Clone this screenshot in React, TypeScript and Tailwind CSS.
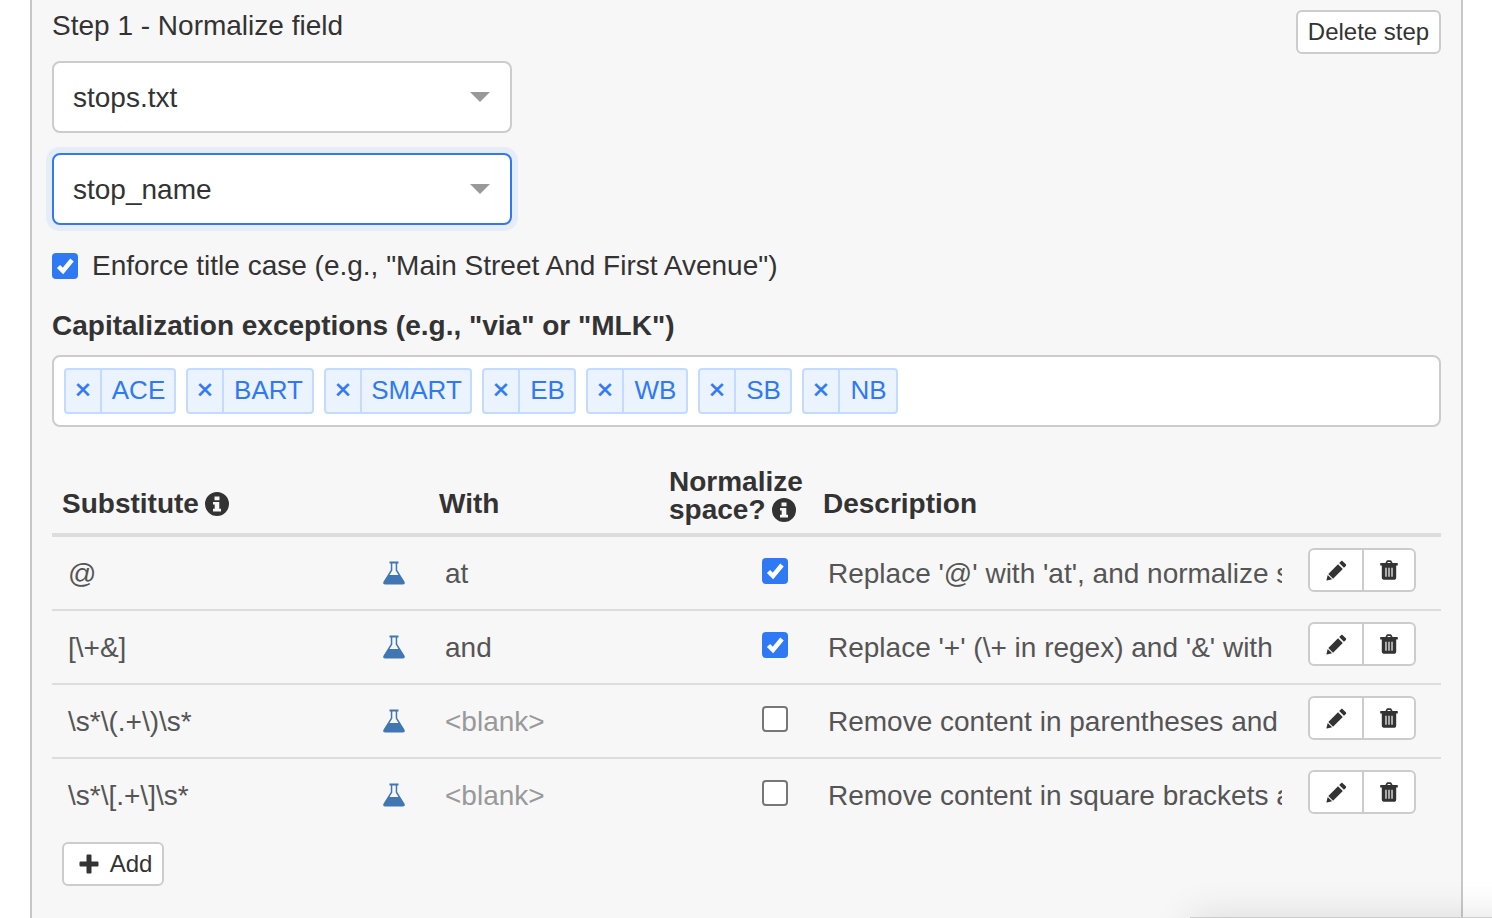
import React from 'react';

const FlaskIcon = () => (
  <svg viewBox="0 0 24 24" className="w-[24px] h-[24px] text-[#4077b3] -ml-[1px]" fill="currentColor">
    <path fillRule="evenodd" d="M7.500.5h9v2h-1.300V9l7.200 11.500c1 1.700.2 3-1.700 3H3.300c-1.900 0-2.700-1.300-1.700-3L8.800 9V2.500H7.500V.5zM10.300 2.500v7L7.500 14h9l-2.800-4.500v-7h-3.400z" />
  </svg>
);

const PencilIcon = () => (
  <svg viewBox="0 0 22 22" className="w-[21px] h-[21px] text-[#333]" fill="currentColor">
    <path d="M15.800 1.200c.5-.5 1.200-.5 1.700 0l3.300 3.300c.5.500.5 1.200 0 1.700l-2 2-5-5 2-2zM12.600 4.400l5 5L7.400 19.600l-5-5L12.600 4.400zM1.800 15.600l4.600 4.600L1 21.500c-.4.100-.6-.1-.5-.5l1.300-5.400z" />
  </svg>
);

const TrashIcon = () => (
  <svg viewBox="0 0 20 22" className="w-[18px] h-[20px] text-[#333]" fill="currentColor">
    <path fillRule="evenodd" d="M6 3.200 7.200 1c.2-.5.700-.8 1.200-.8h3.200c.5 0 1 .3 1.200.8L14 3.200h5.200c.4 0 .6.2.6.6v1.600c0 .4-.2.6-.6.6H18v13.300c0 1.500-1 2.600-2.300 2.600H4.300C3 22 2 20.900 2 19.400V6H.8c-.4 0-.6-.2-.6-.6V3.800c0-.4.2-.6.6-.6H6zM8.100 3.200h3.800l-.6-1.200H8.700l-.6 1.200zM6 8.500v10h1.300v-10H6zm3.350 0v10h1.300v-10h-1.300zm3.350 0v10H14v-10h-1.300z" />
  </svg>
);

const InfoIcon = () => (
  <svg viewBox="0 0 24 24" className="w-[24px] h-[24px] text-[#333] shrink-0" fill="currentColor">
    <path fillRule="evenodd" d="M12 0a12 12 0 1 1 0 24 12 12 0 0 1 0-24zM9.500 4.500v3.700h5V4.500h-5zM8 10v2.600h1.700v4.200H8v2.700h8v-2.700h-1.700V10H8z" />
  </svg>
);

const PlusIcon = () => (
  <svg viewBox="0 0 20 20" className="w-[20px] h-[20px] text-[#333]" fill="currentColor">
    <path d="M7.500 1.500a1 1 0 0 1 1-1h3a1 1 0 0 1 1 1v6h6a1 1 0 0 1 1 1v3a1 1 0 0 1-1 1h-6v6a1 1 0 0 1-1 1h-3a1 1 0 0 1-1-1v-6h-6a1 1 0 0 1-1-1v-3a1 1 0 0 1 1-1h6v-6z" />
  </svg>
);

const Caret = () => (
  <div className="w-0 h-0 border-l-[10px] border-r-[10px] border-t-[10px] border-l-transparent border-r-transparent border-t-[#999]" />
);

const Checkbox = ({ checked }: { checked: boolean }) =>
  checked ? (
    <div className="w-[26px] h-[26px] rounded-[4px] bg-[#2f79f5] flex items-center justify-center shrink-0">
      <svg viewBox="0 0 26 26" className="w-[26px] h-[26px]" fill="none" stroke="#fff" strokeWidth="4.500">
        <path d="M6.500 13.500l4.500 4.500 9-11" />
      </svg>
    </div>
  ) : (
    <div className="w-[26px] h-[26px] rounded-[4px] bg-white border-2 border-[#777] shrink-0" />
  );

const tags = [
  { label: 'ACE', w: 'w-[112px]' },
  { label: 'BART', w: 'w-[128px]' },
  { label: 'SMART', w: 'w-[148px]' },
  { label: 'EB', w: 'w-[94px]' },
  { label: 'WB', w: 'w-[102px]' },
  { label: 'SB', w: 'w-[94px]' },
  { label: 'NB', w: 'w-[96px]' },
];

const rows = [
  { sub: '@', with: 'at', blank: false, norm: true, desc: "Replace '@' with 'at', and normalize space" },
  { sub: '[\\+&]', with: 'and', blank: false, norm: true, desc: "Replace '+' (\\+ in regex) and '&' with" },
  { sub: '\\s*\\(.+\\)\\s*', with: '<blank>', blank: true, norm: false, desc: 'Remove content in parentheses and' },
  { sub: '\\s*\\[.+\\]\\s*', with: '<blank>', blank: true, norm: false, desc: 'Remove content in square brackets and adjacent' },
];

const App: React.FC = () => {
  return (
    <div className="relative w-[1492px] h-[918px] overflow-hidden bg-white font-['Liberation_Sans',Arial,sans-serif] text-[#333]">
      <div className="ml-[30px] w-[1433px] h-[918px] bg-[#f7f7f7] border-x-2 border-[#c8c8c8] pl-[20px] pr-[20px]">
        {/* Step header */}
        <div className="flex justify-between items-start h-[61px] pt-[10px]">
          <h2 className="text-[28px] leading-[32px] font-normal">Step 1 - Normalize field</h2>
          <button className="w-[145px] h-[44px] bg-white border-2 border-[#ccc] rounded-[6px] text-[24px]">Delete step</button>
        </div>

        {/* Selects */}
        <div className="w-[460px] h-[72px] bg-white border-2 border-[#ccc] rounded-[8px] pl-[19px] pr-[20px] flex items-center justify-between text-[28px]">
          <span className="pt-[2px]">stops.txt</span>
          <Caret />
        </div>
        <div className="mt-[20px] w-[460px] h-[72px] bg-white border-2 border-[#2f79f5] rounded-[8px] shadow-[0_0_0_6px_#e6edf9] pl-[19px] pr-[20px] flex items-center justify-between text-[28px]">
          <span className="pt-[2px]">stop_name</span>
          <Caret />
        </div>

        {/* Title case */}
        <div className="mt-[28px] h-[26px] flex items-center gap-[14px] text-[28px]">
          <Checkbox checked />
          <span>Enforce title case (e.g., "Main Street And First Avenue")</span>
        </div>

        {/* Exceptions */}
        <div className="mt-[30px] text-[28px] leading-[34px] font-bold h-[34px]">Capitalization exceptions (e.g., "via" or "MLK")</div>
        <div className="mt-[12px] h-[72px] bg-white border-2 border-[#ccc] rounded-[8px] pl-[10px] flex items-center gap-[10px]">
          {tags.map((t) => (
            <div key={t.label} className={`${t.w} h-[46px] flex bg-[#ebf3ff] border-2 border-[#c2dbff] rounded-[4px] text-[#2f79f5] text-[26px]`}>
              <span className="w-[36px] flex items-center justify-center border-r-2 border-[#c2dbff] text-[28px] [-webkit-text-stroke:0.5px_#2f79f5] pb-[2px]">×</span>
              <span className="flex-1 flex items-center justify-center pb-[2px] pl-[1px]">{t.label}</span>
            </div>
          ))}
        </div>

        {/* Table header */}
        <div className="mt-[38px] h-[72px] flex items-end border-b-4 border-[#ddd] text-[28px] font-bold leading-[28px]">
          <div className="w-[377px] pl-[10px] pb-[15px] flex items-center gap-[6px]">Substitute <InfoIcon /></div>
          <div className="w-[230px] pl-[10px] pb-[15px]">With</div>
          <div className="w-[154px] pl-[10px] pb-[9px]">
            <div>Normalize</div>
            <div className="flex items-center gap-[6px]">space? <InfoIcon /></div>
          </div>
          <div className="pl-[10px] pb-[15px]">Description</div>
        </div>

        {/* Rules */}
        {rows.map((r, i) => (
          <div key={i} className={`h-[74px] flex items-center border-b-2 text-[28px] text-[#555] ${i === rows.length - 1 ? 'border-transparent' : 'border-[#ddd]'}`}>
            <div className="w-[331px] pl-[16px] pt-[2px]">{r.sub}</div>
            <div className="w-[46px] flex justify-start"><FlaskIcon /></div>
            <div className={`w-[333px] pl-[16px] pt-[2px] ${r.blank ? 'text-[#999]' : ''}`}>{r.with}</div>
            <div className="w-[66px] mb-[4px]"><Checkbox checked={r.norm} /></div>
            <div className="w-[454px] overflow-hidden whitespace-nowrap pt-[2px]">{r.desc}</div>
            <div className="ml-[26px] w-[108px] h-[44px] flex bg-white border-2 border-[#ccc] rounded-[6px] -mt-[6px]">
              <div className="w-[54px] flex items-center justify-center border-r-2 border-[#ccc]"><PencilIcon /></div>
              <div className="flex-1 flex items-center justify-center"><TrashIcon /></div>
            </div>
          </div>
        ))}

        <button className="ml-[10px] mt-[9px] w-[102px] h-[44px] bg-white border-2 border-[#ccc] rounded-[6px] flex items-center justify-center gap-[11px] pl-[5px] text-[24px]">
          <PlusIcon />
          Add
        </button>
      </div>

      {/* shadow of something just below the window */}
      <div className="absolute left-[1190px] top-[917px] w-[400px] h-[40px] bg-white border-t border-[#ccc] shadow-[0_0_40px_rgba(0,0,0,0.12)]" />
    </div>
  );
};

export default App;
